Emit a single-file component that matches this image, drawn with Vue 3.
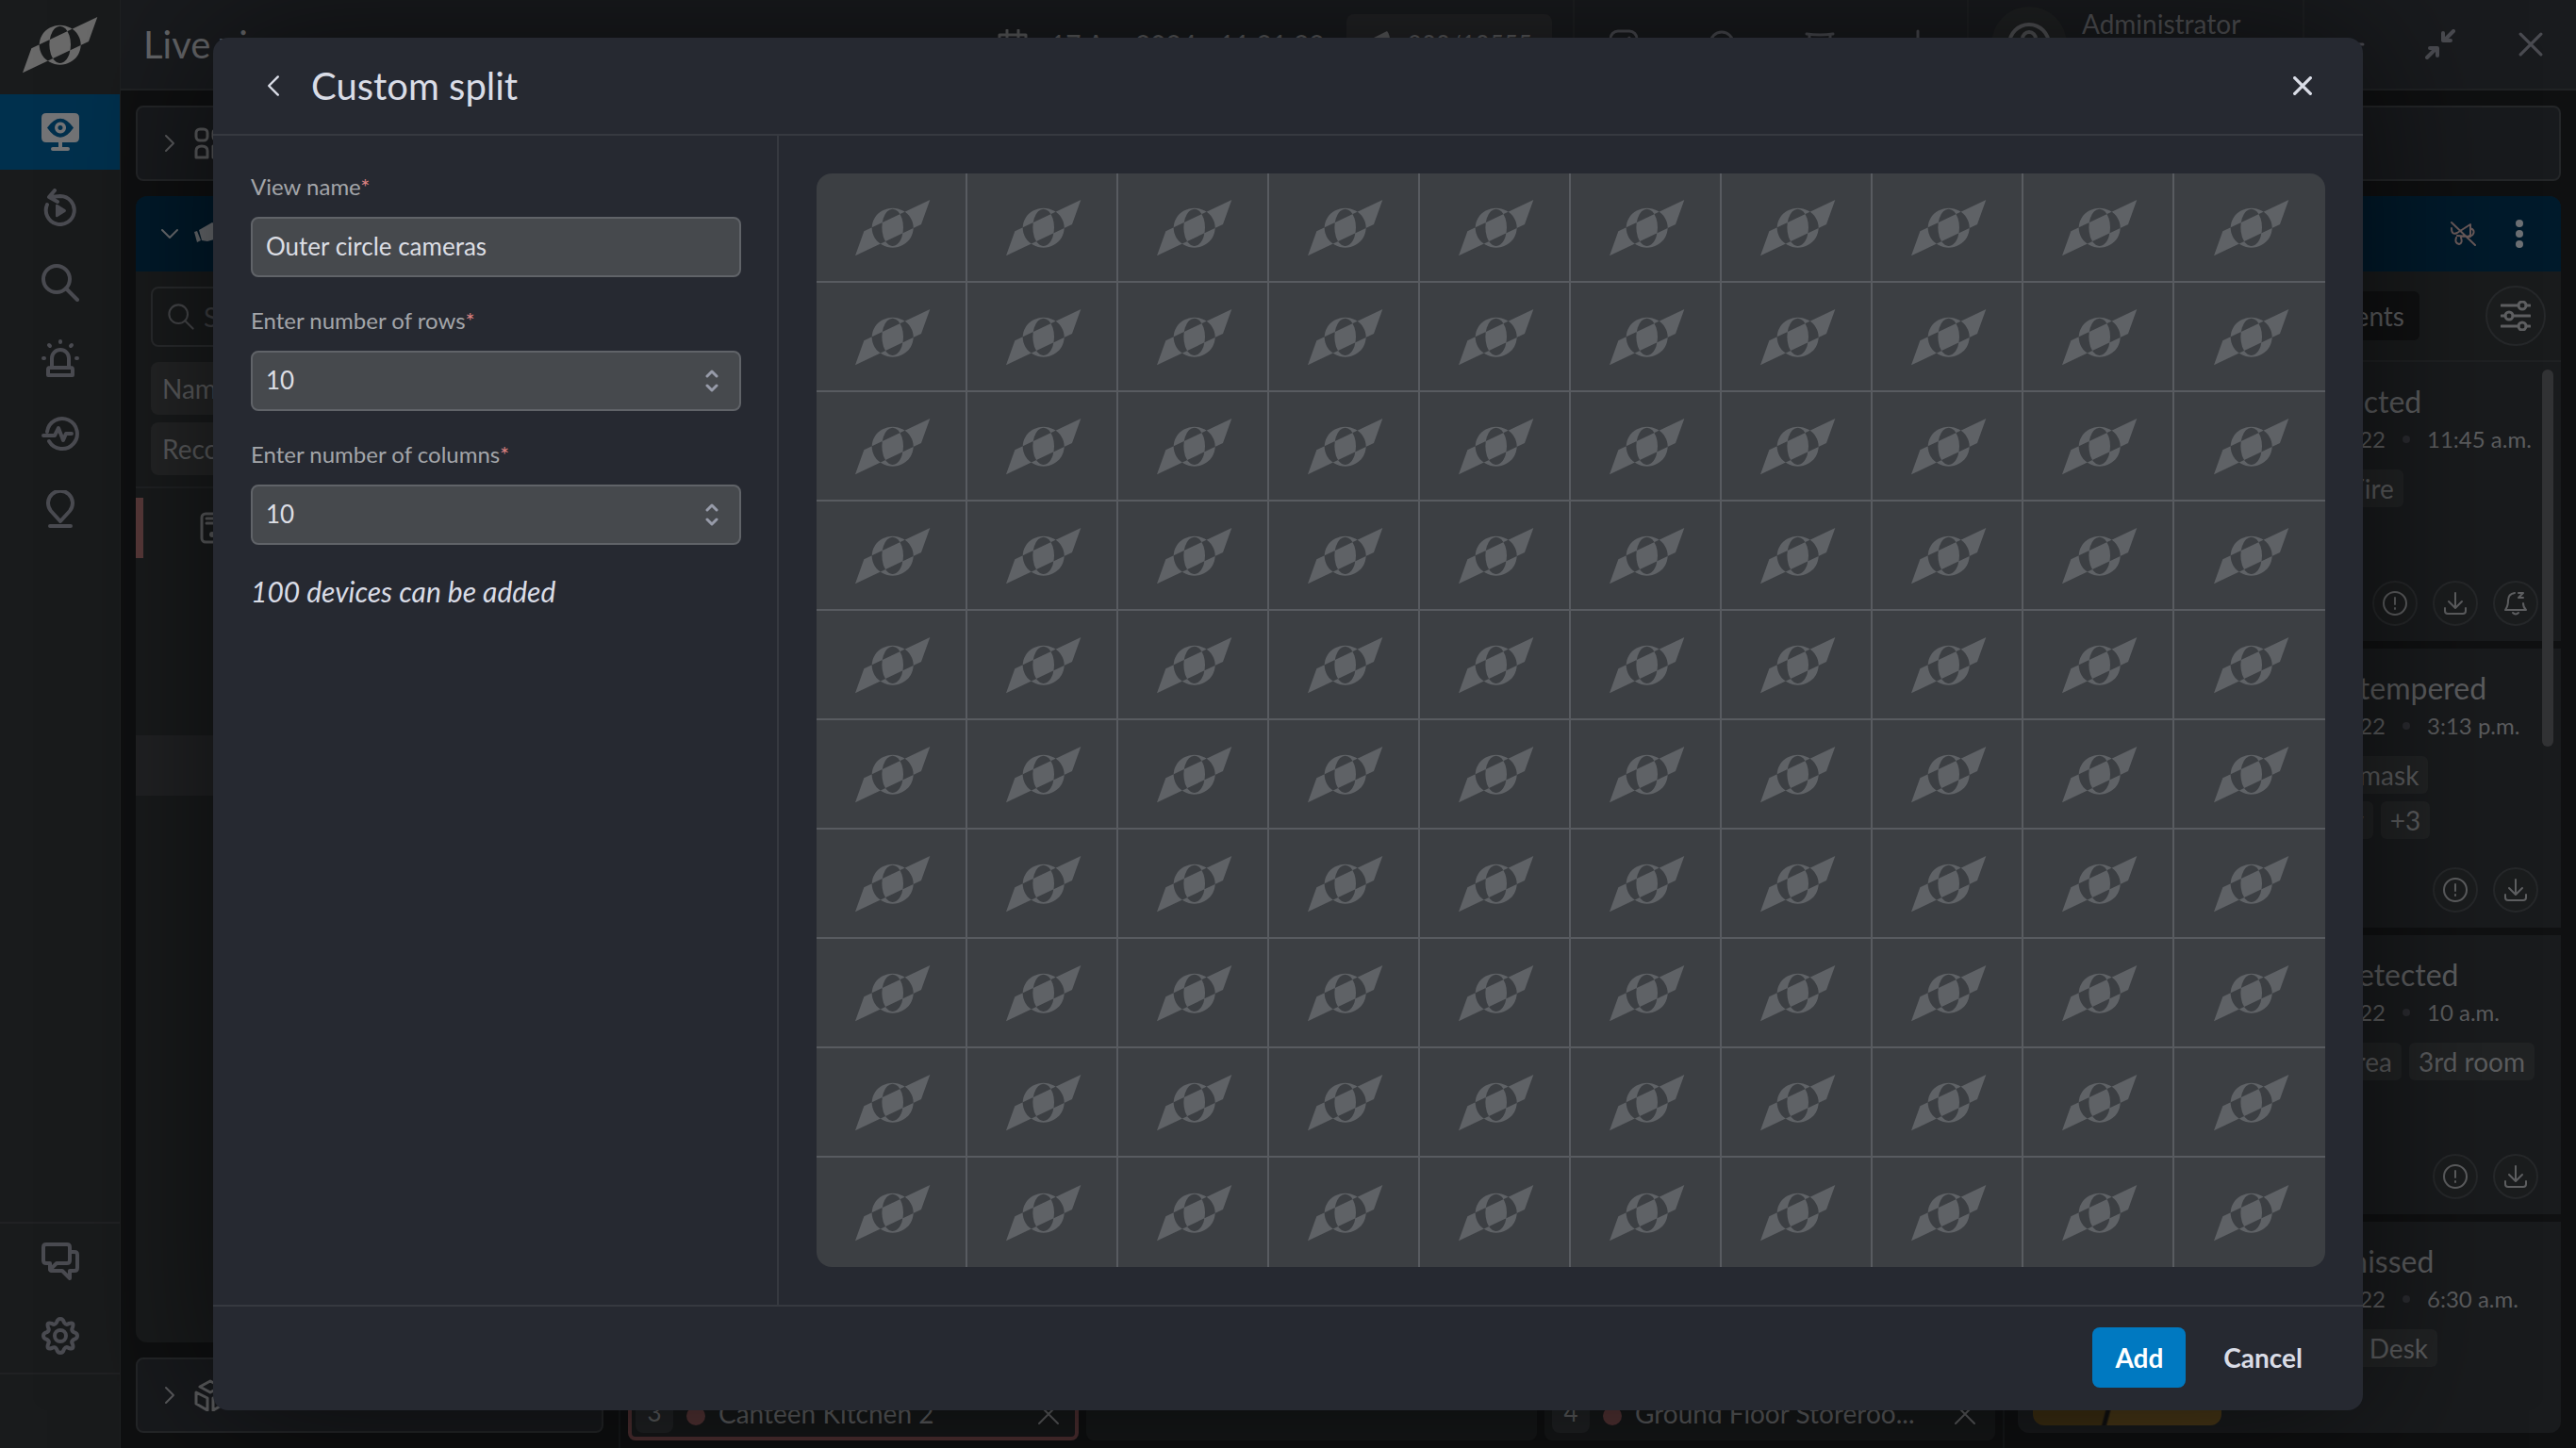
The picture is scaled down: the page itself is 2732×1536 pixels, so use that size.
<template>
    <div class="app">
        <svg class="symbols" aria-hidden="true">
            <symbol id="logo" viewBox="0 0 240 180">
                <path fill="currentColor" fill-rule="evenodd"
                    d="M238 0 L210 78 L0 178 L28 100 Z M119 26 a66 63 0 1 0 .1 0 Z M119 29 a34 59 0 1 0 .1 0 Z" />
            </symbol>
            <symbol id="chevron" viewBox="0 0 12 20">
                <path d="M2 2 L10 10 L2 18" />
            </symbol>
            <symbol id="cross" viewBox="0 0 24 24">
                <path d="M2 2 L22 22 M22 2 L2 22" />
            </symbol>
            <symbol id="lens" viewBox="0 0 40 40">
                <circle cx="16" cy="16" r="14" />
                <path d="M26 26 L38 38" />
            </symbol>
            <symbol id="info" viewBox="0 0 28 28">
                <circle cx="14" cy="14" r="12" />
                <path d="M14 8 V15 M14 19 V20" />
            </symbol>
            <symbol id="download" viewBox="0 0 28 28">
                <path d="M14 3 V18 M7 12 L14 19 L21 12 M3 19 V22 Q3 25 6 25 H22 Q25 25 25 22 V19" />
            </symbol>
            <symbol id="snooze" viewBox="0 0 28 28">
                <path d="M13 3 Q6 4 6 11 Q6 17 3 21 H25 Q22 18 22 14 M11 24 Q14 27 17 24 M17 3 H22 L17 8 H22" />
            </symbol>
        </svg>

        <nav class="sidebar">
            <a href="#" class="brand" aria-label="Home"><svg class="brand-logo"><use href="#logo" /></svg></a>
            <a href="#" class="nav-item active" aria-label="Live view">
                <svg class="icon" viewBox="0 0 40 40">
                    <path class="solid" fill-rule="evenodd"
                        d="M5 0 H35 Q40 0 40 5 V26 Q40 31 35 31 H22 V36 H28 Q30 36 30 38 T28 40 H12 Q10 40 10 38 T12 36 H18 V31 H5 Q0 31 0 26 V5 Q0 0 5 0 Z M6 15.500 Q20 -4 34 15.500 Q20 36 6 15.500 Z M20 9.500 a6 6 0 1 0 .1 0 Z M20 13 a2.500 2.500 0 1 1 -.1 0 Z" />
                </svg>
            </a>
            <a href="#" class="nav-item" aria-label="Playback">
                <svg class="icon" viewBox="0 0 40 40">
                    <path d="M6 17 A15 15 0 1 0 20 8 L9 9 M14 2 L8 9 L17 14" />
                    <path class="solid" d="M15 18 Q15 16 17 17 L25 22 Q27 23.500 25 25 L17 30 Q15 31 15 29 Z" />
                </svg>
            </a>
            <a href="#" class="nav-item" aria-label="Search"><svg class="icon"><use href="#lens" /></svg></a>
            <a href="#" class="nav-item" aria-label="Alarms">
                <svg class="icon" viewBox="0 0 40 40">
                    <path d="M11 29 V20 A9 9 0 0 1 29 20 V29 M9 30 H31 Q33 30 33 32 V38 H7 V32 Q7 30 9 30 Z M20 2 V3 M8 6 L9 7 M32 6 L31 7 M2 20 H3 M37 20 H38" />
                </svg>
            </a>
            <a href="#" class="nav-item" aria-label="Health">
                <svg class="icon" viewBox="0 0 40 40">
                    <path d="M6 18 A16 16 0 1 1 8 28 M2 22 H14 L18 14 L23 27 L26 20 H32" />
                </svg>
            </a>
            <a href="#" class="nav-item" aria-label="Map">
                <svg class="icon" viewBox="0 0 40 40">
                    <path d="M20 33 L10 22 A13 13 0 1 1 30 22 Z M9 38 H31" />
                </svg>
            </a>
            <div class="nav-bottom">
                <a href="#" class="nav-item" aria-label="Messages">
                    <svg class="icon" viewBox="0 0 40 40">
                        <path d="M5 2 H27 Q30 2 30 5 V19 Q30 22 27 22 H16 L9 29 V22 H5 Q2 22 2 19 V5 Q2 2 5 2 Z M31 10 H35 Q38 10 38 13 V27 Q38 30 35 30 H30 V38 L22 30 H10" />
                    </svg>
                </a>
                <a href="#" class="nav-item" aria-label="Settings">
                    <svg class="icon" viewBox="0 0 40 40">
                        <path d="M20 2 Q23 2 24 6 Q26 9 29 7 Q35 5 33 11 Q31 14 34 16 Q38 17 38 20 Q38 23 34 24 Q31 26 33 29 Q35 35 29 33 Q26 31 24 34 Q23 38 20 38 Q17 38 16 34 Q14 31 11 33 Q5 35 7 29 Q9 26 6 24 Q2 23 2 20 Q2 17 6 16 Q9 14 7 11 Q5 5 11 7 Q14 9 16 6 Q17 2 20 2 Z" />
                        <circle cx="20" cy="20" r="6" />
                    </svg>
                </a>
            </div>
        </nav>

        <div class="main">
            <header class="topbar">
                <h1 class="page-title">Live view</h1>
                <div class="clock">
                    <svg class="icon small" viewBox="0 0 32 32">
                        <path d="M2 6 H30 V30 H2 Z M2 13 H30 M10 1 V12 M22 1 V12" />
                    </svg>
                    <time>17 Apr 2024</time>
                    <time>11:21:22</time>
                </div>
                <div class="counter">
                    <svg class="icon tiny" viewBox="0 0 28 28">
                        <path class="solid" d="M2 10 L22 0 Q25 3 26 14 L8 20 Z" />
                    </svg>
                    <span>200/10555</span>
                </div>
                <div class="tools">
                    <button type="button" aria-label="Layouts">
                        <svg class="icon small" viewBox="0 0 32 32"><rect x="2" y="2" width="28" height="28" rx="8" /><path d="M14 17 L22 9" /></svg>
                    </button>
                    <button type="button" aria-label="Notifications">
                        <svg class="icon small" viewBox="0 0 32 32"><circle cx="16" cy="15" r="12" /></svg>
                    </button>
                    <button type="button" aria-label="Archive">
                        <svg class="icon small" viewBox="0 0 32 32"><path d="M2 5 Q16 7 30 5 M5 6 V26 H27 V6" /></svg>
                    </button>
                    <button type="button" aria-label="Add">
                        <svg class="icon small" viewBox="0 0 32 32"><path d="M16 2 V30 M2 16 H30" /></svg>
                    </button>
                </div>
                <div class="user">
                    <span class="avatar">
                        <svg class="icon avatar-icon" viewBox="0 0 48 48"><circle cx="24" cy="24" r="21" /><circle cx="24" cy="18" r="7" /></svg>
                    </span>
                    <span class="user-text"><span>Administrator</span><span>Admin</span></span>
                </div>
                <div class="window-buttons">
                    <button type="button" aria-label="Minimise">
                        <svg class="icon small" viewBox="0 0 32 32"><path d="M2 16 H30" /></svg>
                    </button>
                    <button type="button" aria-label="Restore">
                        <svg class="icon small restore" viewBox="0 0 32 32"><path d="M30 2 L21 11 M19 4 V12 H27 M2 30 L11 21 M5 20 H13 V28" /></svg>
                    </button>
                    <button type="button" aria-label="Close window">
                        <svg class="icon close"><use href="#cross" /></svg>
                    </button>
                </div>
            </header>

            <div class="workspace">
                <aside class="left-column">
                    <section class="panel collapsed">
                        <svg class="chevron"><use href="#chevron" /></svg>
                        <svg class="panel-icon" viewBox="0 0 34 34">
                            <rect x="2" y="2" width="12" height="12" rx="4" /><rect x="20" y="2" width="12" height="12" rx="4" />
                            <path d="M2 32 V25 Q2 20 8 20 T14 25 V32 Z M20 32 V20 H32 V32 Z" />
                        </svg>
                    </section>
                    <section class="panel devices">
                        <div class="panel-head">
                            <svg class="chevron down"><use href="#chevron" /></svg>
                            <svg class="panel-icon" viewBox="0 0 34 34">
                                <path class="solid" d="M5 13 L19 5 L32 12 L32 20 L14 25 L8 24 Z M0 15 L3 14 L7 24 L3 26 Z" />
                            </svg>
                        </div>
                        <div class="device-filters">
                            <label class="search">
                                <svg class="search-icon"><use href="#lens" /></svg>
                                <input type="text" placeholder="Search" aria-label="Search devices">
                            </label>
                            <button type="button" class="filter">Name</button>
                            <button type="button" class="filter">Recording</button>
                        </div>
                        <div class="device-row">
                            <svg class="panel-icon" viewBox="0 0 34 34">
                                <rect x="2" y="2" width="30" height="30" rx="4" /><path d="M7 7 H27 M7 12 H27" /><circle class="solid" cx="13" cy="24" r="3" />
                            </svg>
                        </div>
                        <div class="device-highlight"></div>
                    </section>
                    <section class="panel collapsed">
                        <svg class="chevron"><use href="#chevron" /></svg>
                        <svg class="panel-icon" viewBox="0 0 34 34">
                            <path d="M17 2 L28 8 L17 14 L6 8 Z M2 14 L14 20 V33 L2 26 Z M32 14 L20 20 V33 L32 26 Z" />
                        </svg>
                    </section>
                </aside>

                <div class="tiles">
                    <div v-for="(tile, index) in tiles" :key="index" class="tile" :class="{ alert: tile.alert }">
                        <template v-if="tile.name">
                            <span class="tile-number">{{ tile.number }}</span>
                            <span class="tile-dot"></span>
                            <span class="tile-name">{{ tile.name }}</span>
                            <button type="button" class="tile-close" aria-label="Remove"><svg class="icon tile-cross"><use href="#cross" /></svg></button>
                        </template>
                    </div>
                </div>

                <aside class="right-column">
                    <section class="panel collapsed"></section>
                    <section class="panel events">
                        <div class="panel-head end">
                            <svg class="muted" viewBox="0 0 28 28">
                                <path d="M2 8 Q2 16 8 13 L22 4 L22 17 L8 16 M22 8 Q27 10 25 14 Q24 17 21 16 M7 18 Q5 24 10 25 Q14 24 12 18 M2 2 L27 26" />
                            </svg>
                            <svg class="kebab" viewBox="0 0 8 30">
                                <circle cx="4" cy="4" r="4" /><circle cx="4" cy="15" r="4" /><circle cx="4" cy="26" r="4" />
                            </svg>
                        </div>
                        <div class="event-tabs">
                            <button type="button" class="tab">All events</button>
                            <button type="button" class="round large" aria-label="Filter">
                                <svg class="icon small" viewBox="0 0 32 32">
                                    <path d="M1 5 H19 M27 5 H31 M1 16 H5 M13 16 H31 M1 27 H19 M27 27 H31" />
                                    <circle cx="23" cy="5" r="4" /><circle cx="9" cy="16" r="4" /><circle cx="23" cy="27" r="4" />
                                </svg>
                            </button>
                        </div>
                        <div class="event-list">
                            <article v-for="event in events" :key="event.title" class="event">
                                <div class="thumb"></div>
                                <div class="event-body">
                                    <h3>{{ event.title }}</h3>
                                    <p class="when"><span class="day">{{ event.day }}</span><i></i><span>{{ event.time }}</span></p>
                                    <div v-for="(line, n) in event.tags" :key="n" class="tags">
                                        <span v-for="tag in line" :key="tag">{{ tag }}</span>
                                    </div>
                                    <div class="event-actions">
                                        <button v-for="action in event.actions" :key="action" type="button" class="round" :aria-label="action">
                                            <svg class="action-icon"><use :href="'#' + action" /></svg>
                                        </button>
                                    </div>
                                </div>
                            </article>
                            <div class="scrollbar"></div>
                        </div>
                    </section>
                </aside>
            </div>
        </div>

        <div class="overlay">
            <form class="modal" role="dialog" aria-labelledby="modal-title" @submit.prevent>
                <header class="modal-head">
                    <button type="button" class="back" aria-label="Back"><svg><use href="#chevron" /></svg></button>
                    <h2 id="modal-title">Custom split</h2>
                    <button type="button" class="dismiss" aria-label="Close"><svg><use href="#cross" /></svg></button>
                </header>
                <div class="modal-body">
                    <div class="settings">
                        <div class="field">
                            <label for="view-name">View name<sup>*</sup></label>
                            <div class="control"><input id="view-name" v-model="viewName" type="text"></div>
                        </div>
                        <div class="field">
                            <label for="rows">Enter number of rows<sup>*</sup></label>
                            <div class="control">
                                <input id="rows" v-model.number="rows" type="number" min="1" max="10">
                                <span class="stepper">
                                    <button type="button" aria-label="More rows" @click="rows = step(rows, 1)"><svg viewBox="0 0 14 10"><path d="M2 8 L7 3 L12 8" /></svg></button>
                                    <button type="button" aria-label="Fewer rows" @click="rows = step(rows, -1)"><svg viewBox="0 0 14 10"><path d="M2 2 L7 7 L12 2" /></svg></button>
                                </span>
                            </div>
                        </div>
                        <div class="field">
                            <label for="columns">Enter number of columns<sup>*</sup></label>
                            <div class="control">
                                <input id="columns" v-model.number="columns" type="number" min="1" max="10">
                                <span class="stepper">
                                    <button type="button" aria-label="More columns" @click="columns = step(columns, 1)"><svg viewBox="0 0 14 10"><path d="M2 8 L7 3 L12 8" /></svg></button>
                                    <button type="button" aria-label="Fewer columns" @click="columns = step(columns, -1)"><svg viewBox="0 0 14 10"><path d="M2 2 L7 7 L12 2" /></svg></button>
                                </span>
                            </div>
                        </div>
                        <p class="capacity">{{ cellCount }} devices can be added</p>
                    </div>
                    <div class="preview">
                        <div class="split" :style="gridStyle">
                            <div v-for="n in cellCount" :key="n" class="cell"
                                :class="{ 'last-col': n % columns === 0, 'last-row': n > cellCount - columns }">
                                <svg class="cell-logo"><use href="#logo" /></svg>
                            </div>
                        </div>
                    </div>
                </div>
                <footer class="modal-foot">
                    <button type="submit" class="primary">Add</button>
                    <button type="button" class="plain">Cancel</button>
                </footer>
            </form>
        </div>
    </div>
</template>

<script setup>
import { ref, computed } from 'vue'

const viewName = ref('Outer circle cameras')
const rows = ref(10)
const columns = ref(10)

const cellCount = computed(() => rows.value * columns.value)
const gridStyle = computed(() => ({
    gridTemplateColumns: `repeat(${columns.value}, 1fr)`,
    gridTemplateRows: `repeat(${rows.value}, 1fr)`
}))

const step = (value, by) => Math.min(10, Math.max(1, value + by))

const tiles = [
    { number: 3, name: 'Canteen Kitchen 2', alert: true },
    {},
    { number: 4, name: 'Ground Floor Storeroo...' }
]

const events = [
    { title: 'Face detected', day: '12 Jun 2022', time: '11:45 a.m.', tags: [['Smoke', 'Fire']], actions: ['info', 'download', 'snooze'] },
    { title: 'Cameras tempered', day: '12 Jun 2022', time: '3:13 p.m.', tags: [['Hall', 'No mask'], ['Lobby bay', '+3']], actions: ['info', 'download'] },
    { title: 'Motion detected', day: '12 Jun 2022', time: '10 a.m.', tags: [['Waiting area', '3rd room']], actions: ['info', 'download'] },
    { title: 'Rounds missed', day: '12 Jun 2022', time: '6:30 a.m.', tags: [['Reception Desk']], actions: ['info', 'download'] }
]
</script>

<style>
body {
    background: #0f1011;
}
</style>

<style scoped>
* {
    box-sizing: border-box;
}

.app {
    position: relative;
    display: flex;
    height: 100vh;
    overflow: hidden;
    background: #0f1011;
    color: #5c5d5f;
    font-family: Lato, sans-serif;
    font-size: 26px;
}

.symbols {
    position: absolute;
    width: 0;
    height: 0;
}

svg {
    display: block;
    flex-shrink: 0;
    fill: none;
    stroke: currentColor;
    stroke-width: 4px;
    stroke-linecap: round;
    stroke-linejoin: round;
}

button {
    padding: 0;
    border: 0;
    background: none;
    color: inherit;
    font: inherit;
}

input {
    min-width: 0;
    border: 0;
    outline: 0;
    background: none;
    color: inherit;
    font: inherit;
    appearance: textfield;
    -moz-appearance: textfield;
}

input::-webkit-inner-spin-button {
    display: none;
}

h1,
h2,
h3,
p {
    margin: 0;
    font-weight: 400;
}

.solid {
    fill: currentColor;
    stroke: none;
}

.icon {
    width: 40px;
    height: 40px;
}

.icon.small {
    width: 32px;
    height: 32px;
    stroke-width: 3px;
}

.icon.restore {
    stroke-width: 4px;
}

.icon.tiny {
    width: 28px;
    height: 28px;
}

.icon.close {
    width: 26px;
    height: 26px;
    stroke-width: 3px;
}

/* sidebar */
.sidebar {
    display: flex;
    flex-direction: column;
    flex-shrink: 0;
    width: 128px;
    border-right: 1px solid #1f2122;
    background: #191b1c;
    color: #4a4b51;
}

.brand {
    display: flex;
    align-items: center;
    justify-content: center;
    height: 100px;
    padding-bottom: 4px;
    color: #6a6a6a;
}

.brand-logo,
.cell-logo {
    width: 80px;
    height: 60px;
    stroke: none;
}

.nav-item {
    display: flex;
    align-items: center;
    justify-content: center;
    height: 80px;
    color: inherit;
}

.nav-item.active {
    background: #00304d;
    color: #737476;
}

.nav-bottom {
    margin-top: auto;
    margin-bottom: 78px;
    border-top: 2px solid #202123;
    border-bottom: 2px solid #202123;
}

.nav-bottom .nav-item {
    height: 79px;
}

/* top bar */
.main {
    display: flex;
    flex: 1;
    flex-direction: column;
    min-width: 0;
}

.topbar {
    display: flex;
    align-items: center;
    flex-shrink: 0;
    height: 96px;
    border-bottom: 2px solid #202224;
    background: #191b1e;
}

.page-title {
    margin-left: 24px;
    color: #656669;
    font-size: 40px;
    line-height: 48px;
    white-space: nowrap;
}

.clock {
    display: flex;
    align-items: center;
    gap: 24px;
    width: 342px;
    margin-left: auto;
    margin-right: 28px;
    font-size: 28px;
    white-space: nowrap;
}

.clock time:last-child {
    margin-left: auto;
}

.counter {
    display: flex;
    align-items: center;
    justify-content: center;
    gap: 16px;
    width: 218px;
    height: 64px;
    margin-right: 22px;
    border-radius: 8px;
    background: #222325;
}

.tools,
.user,
.window-buttons {
    display: flex;
    align-items: center;
    height: 100%;
    border-left: 2px solid #1e2022;
    color: #4a4b51;
}

.tools button {
    display: flex;
    justify-content: center;
    width: 104px;
}

.user {
    gap: 16px;
    width: 356px;
    padding-left: 24px;
    color: #525356;
    font-size: 28px;
}

.avatar {
    display: flex;
    align-items: center;
    justify-content: center;
    width: 80px;
    height: 80px;
    border-radius: 50%;
    background: #1f2122;
}

.avatar-icon {
    width: 48px;
    height: 48px;
}

.user-text {
    display: flex;
    flex-direction: column;
    line-height: 44px;
}

.window-buttons button {
    display: flex;
    justify-content: center;
    width: 96px;
}

/* workspace columns */
.workspace {
    display: flex;
    flex: 1;
    min-height: 0;
}

.left-column,
.right-column {
    display: flex;
    flex-direction: column;
    flex-shrink: 0;
    gap: 16px;
    padding: 16px;
}

.left-column {
    width: 530px;
    border-right: 2px solid #16181a;
}

.right-column {
    width: 608px;
    padding-left: 14px;
    border-left: 2px solid #16181a;
}

.panel {
    overflow: hidden;
    border-radius: 12px;
    background: #191b1c;
}

.panel.collapsed {
    display: flex;
    align-items: center;
    flex-shrink: 0;
    gap: 20px;
    height: 80px;
    padding-left: 28px;
    border: 2px solid #242628;
    border-radius: 8px;
    background: #181a1d;
}

.panel.devices,
.panel.events {
    display: flex;
    flex: 1;
    flex-direction: column;
    min-height: 0;
}

.panel-head {
    display: flex;
    align-items: center;
    flex-shrink: 0;
    gap: 20px;
    height: 80px;
    padding-left: 30px;
    background: #001a2b;
    color: #6d7074;
}

.panel-head.end {
    justify-content: flex-end;
    gap: 42px;
    padding-right: 40px;
}

.chevron {
    width: 12px;
    height: 20px;
    stroke-width: 2px;
}

.chevron.down {
    transform: rotate(90deg);
}

.panel-icon {
    width: 34px;
    height: 34px;
    stroke-width: 3px;
}

.device-filters {
    display: flex;
    align-items: flex-start;
    flex-direction: column;
    gap: 8px;
    padding: 16px 16px 12px;
    border-bottom: 2px solid #202224;
}

.search {
    display: flex;
    align-items: center;
    gap: 10px;
    width: 100%;
    height: 64px;
    margin-bottom: 8px;
    padding-left: 16px;
    border: 2px solid #2a2c2e;
    border-radius: 8px;
    color: #48494c;
}

.search-icon {
    width: 28px;
    height: 28px;
    stroke-width: 3px;
}

.search input {
    padding: 0;
    font-size: 28px;
}

.search input::placeholder {
    color: #404144;
    opacity: 1;
}

.filter {
    height: 56px;
    padding: 0 12px;
    border-radius: 8px;
    background: #242526;
    font-size: 28px;
}

.device-row {
    display: flex;
    align-items: center;
    height: 64px;
    margin-top: 10px;
    padding-left: 60px;
    border-left: 8px solid #5a3a3a;
    background: #191b1c;
}

.device-highlight {
    height: 64px;
    margin-top: 188px;
    background: #212224;
}

/* camera tiles */
.tiles {
    display: grid;
    flex: 1;
    grid-template-columns: repeat(3, 1fr);
    gap: 8px;
    min-width: 0;
    padding: 8px;
}

.tile {
    display: flex;
    align-items: flex-end;
    gap: 14px;
    min-width: 0;
    padding: 8px;
    border-radius: 8px;
    background: #161819;
}

.tile.alert {
    padding: 4px;
    border: 4px solid #4d2f31;
}

.tile-number {
    width: 40px;
    height: 48px;
    border-radius: 8px;
    background: #202224;
    line-height: 52px;
    text-align: center;
}

.tile-dot {
    width: 20px;
    height: 20px;
    margin-bottom: 8px;
    border-radius: 50%;
    background: #543435;
}

.tile-name {
    flex: 1;
    overflow: hidden;
    font-size: 28px;
    line-height: 42px;
    text-overflow: ellipsis;
    white-space: nowrap;
}

.tile-close {
    padding: 8px 12px 8px 0;
}

.tile-cross {
    width: 24px;
    height: 24px;
    stroke-width: 2px;
}

/* events */
.muted {
    width: 28px;
    height: 28px;
    color: #6a5a5a;
    stroke-width: 2px;
}

.kebab {
    width: 8px;
    height: 30px;
    fill: currentColor;
    stroke: none;
}

.event-tabs {
    display: flex;
    align-items: center;
    justify-content: space-between;
    flex-shrink: 0;
    height: 96px;
    padding: 0 16px;
    border-bottom: 2px solid #1f2123;
}

.tab {
    width: 410px;
    height: 52px;
    padding-right: 16px;
    border-radius: 6px;
    background: #101112;
    font-size: 28px;
    text-align: right;
}

.round {
    display: flex;
    align-items: center;
    justify-content: center;
    width: 48px;
    height: 48px;
    border: 2px solid #26282a;
    border-radius: 50%;
    background: #1b1d1e;
    color: #5e5f61;
}

.round.large {
    width: 64px;
    height: 64px;
}

.event-list {
    position: relative;
    display: flex;
    flex: 1;
    flex-direction: column;
    gap: 8px;
    overflow: hidden;
    background: #101112;
}

.event {
    display: flex;
    flex-shrink: 0;
    gap: 16px;
    height: 296px;
    padding: 24px 24px 16px 16px;
    background: #191b1d;
}

.thumb {
    width: 200px;
    height: 192px;
    border-radius: 12px;
    background: linear-gradient(105deg, #3d2f12 49%, #111 50%, #111 51%, #493817 52%);
}

.event-body {
    display: flex;
    flex: 1;
    flex-direction: column;
    white-space: nowrap;
}

.event h3 {
    font-size: 32px;
    line-height: 36px;
}

.when {
    display: flex;
    align-items: center;
    margin: 6px 0 16px;
    font-size: 24px;
    line-height: 32px;
}

.when i {
    width: 8px;
    height: 8px;
    margin: 0 18px;
    border-radius: 50%;
    background: #2a2b30;
}

.day {
    width: 158px;
    text-align: right;
}

.tags {
    display: flex;
    gap: 8px;
    margin-bottom: 8px;
    font-size: 28px;
}

.tags span {
    height: 40px;
    padding: 0 10px;
    border-radius: 6px;
    background: #212324;
    line-height: 40px;
}

.event-actions {
    display: flex;
    justify-content: flex-end;
    gap: 16px;
    margin-top: auto;
}

.action-icon {
    width: 28px;
    height: 28px;
    stroke-width: 2px;
}

.scrollbar {
    position: absolute;
    top: 8px;
    right: 8px;
    width: 12px;
    height: 400px;
    border-radius: 6px;
    background: #313234;
}

/* modal */
.overlay {
    position: absolute;
    inset: 0;
    display: flex;
    padding: 40px 226px;
}

.modal {
    display: flex;
    flex: 1;
    flex-direction: column;
    min-width: 0;
    border-radius: 16px;
    background: #262931;
    box-shadow: 0 0 160px rgba(0, 0, 0, 0.6);
    color: #d9dce6;
}

.modal-head {
    display: flex;
    align-items: center;
    flex-shrink: 0;
    height: 104px;
    padding: 0 54px 0 56px;
    border-bottom: 2px solid #363940;
}

.modal-head h2 {
    margin-left: 32px;
    font-size: 40px;
    line-height: 48px;
}

.back svg {
    width: 16px;
    height: 24px;
    stroke-width: 2px;
    transform: rotate(180deg);
}

.dismiss {
    margin-left: auto;
}

.dismiss svg {
    width: 20px;
    height: 20px;
}

.modal-body {
    display: flex;
    flex: 1;
    min-height: 0;
}

.settings {
    flex-shrink: 0;
    width: 600px;
    padding: 40px 38px 40px 40px;
    border-right: 2px solid #363940;
}

.field {
    margin-bottom: 32px;
}

.field label {
    display: block;
    height: 32px;
    margin-bottom: 14px;
    color: #a3a5a9;
    font-size: 24px;
    line-height: 28px;
}

.field sup {
    color: #d98080;
    font-size: 24px;
    line-height: 0;
    vertical-align: baseline;
}

.control {
    display: flex;
    align-items: center;
    height: 64px;
    padding: 0 22px 0 14px;
    border: 2px solid #606368;
    border-radius: 8px;
    background: #46494d;
    color: #dcdee4;
}

.control input {
    flex: 1;
    height: 100%;
    padding: 0 0 2px;
}

.stepper {
    display: flex;
    flex-direction: column;
    gap: 6px;
    color: #979ba9;
}

.stepper svg {
    width: 14px;
    height: 10px;
    stroke-width: 3px;
}

.capacity {
    font-size: 30px;
    font-style: italic;
    line-height: 34px;
}

.preview {
    display: flex;
    flex: 1;
    min-width: 0;
    padding: 40px;
}

.split {
    display: grid;
    flex: 1;
    overflow: hidden;
    border-radius: 16px;
    background: #3c3f43;
}

.cell {
    display: flex;
    align-items: center;
    justify-content: center;
    min-width: 0;
    padding: 2px 0 0 4px;
    border-right: 2px solid #585b60;
    border-bottom: 2px solid #585b60;
    color: #5f6266;
}

.cell.last-col {
    border-right: 0;
}

.cell.last-row {
    border-bottom: 0;
}

.modal-foot {
    display: flex;
    align-items: center;
    justify-content: flex-end;
    flex-shrink: 0;
    gap: 16px;
    height: 112px;
    padding: 0 40px 2px;
    border-top: 2px solid #363940;
    font-size: 28px;
    font-weight: 700;
}

.modal-foot button {
    height: 64px;
    padding: 0 24px;
    border-radius: 8px;
}

.modal-foot .primary {
    background: #0079c1;
    color: #fff;
}
</style>
